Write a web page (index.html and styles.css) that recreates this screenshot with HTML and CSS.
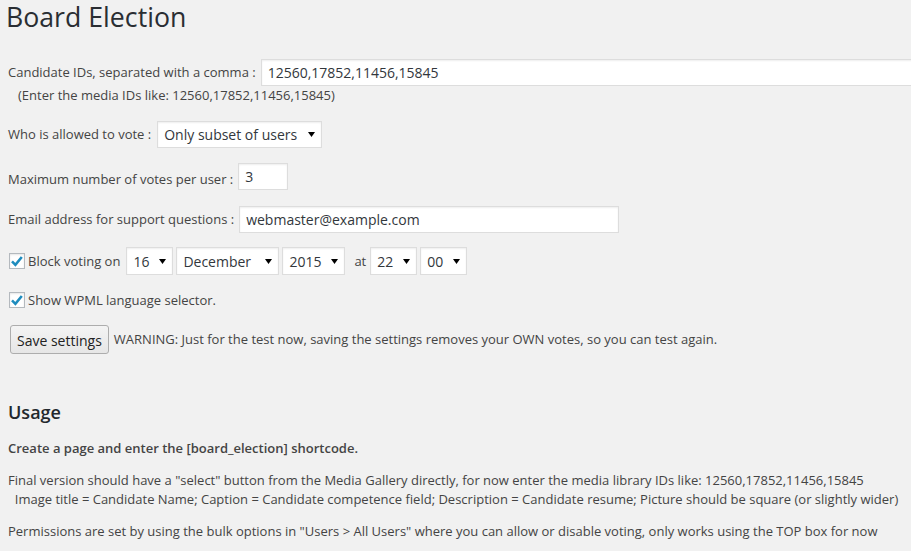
FILE: index.html
```html
<!DOCTYPE html>
<html lang="en">
<head>
<meta charset="utf-8">
<title>Board Election</title>
<link rel="stylesheet" href="styles.css">
</head>
<body>
<h1 class="title">Board Election</h1>
<form class="settings">
  <div class="row row-ids">
    <label class="lbl" for="ids">Candidate IDs, separated with a comma :</label>
    <input id="ids" class="text ids" type="text" value="12560,17852,11456,15845">
  </div>
  <div class="hint">(Enter the media IDs like: 12560,17852,11456,15845)</div>

  <div class="row row-who">
    <label class="lbl" for="who">Who is allowed to vote :</label>
    <select id="who" class="sel sel-who"><option>Only subset of users</option></select>
  </div>

  <div class="row row-max">
    <label class="lbl" for="max">Maximum number of votes per user :</label>
    <input id="max" class="text num" type="text" value="3">
  </div>

  <div class="row row-email">
    <label class="lbl" for="email">Email address for support questions :</label>
    <input id="email" class="text email" type="text" value="webmaster@example.com">
  </div>

  <div class="row row-block">
    <input class="chk" type="checkbox" checked>
    <span class="lbl chk-lbl">Block voting on</span>
    <div class="dates">
      <select class="sel sel-day"><option>16</option></select>
      <select class="sel sel-month"><option>December</option></select>
      <select class="sel sel-year"><option>2015</option></select>
      <span class="lbl at">at</span>
      <select class="sel sel-hour"><option>22</option></select>
      <select class="sel sel-min"><option>00</option></select>
    </div>
  </div>

  <div class="row row-wpml">
    <input class="chk" type="checkbox" checked>
    <span class="lbl chk-lbl">Show WPML language selector.</span>
  </div>

  <div class="row row-save">
    <button type="button" class="btn">Save settings</button>
    <span class="lbl warn">WARNING: Just for the test now, saving the settings removes your OWN votes, so you can test again.</span>
  </div>
</form>

<h2 class="usage">Usage</h2>
<p class="para strong">Create a page and enter the [board_election] shortcode.</p>
<p class="para">Final version should have a "select" button from the Media Gallery directly, for now enter the media library IDs like: 12560,17852,11456,15845<br>&nbsp;&nbsp;Image title = Candidate Name; Caption = Candidate competence field; Description = Candidate resume; Picture should be square (or slightly wider)</p>
<p class="para">Permissions are set by using the bulk options in "Users &gt; All Users" where you can allow or disable voting, only works using the TOP box for now</p>
</body>
</html>
```

FILE: styles.css
```css
html, body {
  margin: 0;
  background: #f1f1f1;
  overflow: hidden;
}

body {
  padding: 0 0 0 8px;
  font-family: "Open Sans", "Noto Sans", sans-serif;
  font-size: 13px;
  color: #444;
}

.title {
  margin: 0 0 0 -2px;
  padding-top: 3px;
  font-size: 26.7px;
  font-weight: 400;
  line-height: 27px;
  color: #2a2e33;
}

.settings {
  display: flex;
  flex-direction: column;
  margin-top: 29px;
}

.row {
  display: flex;
  align-items: center;
  gap: 5px;
  white-space: nowrap;
}

.lbl {
  line-height: 27px;
}

.text {
  box-sizing: border-box;
  height: 27px;
  margin: 0;
  padding: 0 6px;
  border: 1px solid #ddd;
  border-radius: 0;
  background: #fff;
  box-shadow: inset 0 1px 2px rgba(0, 0, 0, 0.07);
  font-family: "Open Sans", "Noto Sans", sans-serif;
  font-size: 14px;
  color: #32373c;
  outline: none;
}

.ids { width: 680px; flex: none; }
.num { width: 50px; }
.email { width: 380px; }

.hint {
  margin-left: 10px;
  line-height: 18px;
}

.row-who { margin-top: 17px; gap: 6px; }
.row-max { margin-top: 15px; align-items: flex-start; }
.row-max .lbl { padding-top: 3px; }
.row-email { margin-top: 13px; }
.row-block { margin-top: 14px; gap: 0; }
.row-wpml { margin-top: 15px; gap: 0; }
.row-save { margin-top: 15px; gap: 5px; }

.sel {
  -webkit-appearance: none;
  appearance: none;
  box-sizing: border-box;
  height: 27px;
  margin: 0;
  padding: 0 0 0 6px;
  border: 1px solid #ddd;
  border-radius: 0;
  background: #fff url("data:image/svg+xml,%3Csvg xmlns='http://www.w3.org/2000/svg' width='7' height='5'%3E%3Cpath d='M0 0h7L3.5 5z' fill='%23000'/%3E%3C/svg%3E") no-repeat right 6px center;
  box-shadow: inset 0 1px 2px rgba(0, 0, 0, 0.07);
  font-family: "Open Sans", "Noto Sans", sans-serif;
  font-size: 14px;
  color: #32373c;
  outline: none;
}

.sel-who { width: 165px; }

.dates {
  display: flex;
  align-items: center;
  gap: 3px;
  margin-left: 6px;
}

.dates .sel { height: 28px; }
.sel-day { width: 47px; }
.sel-month { width: 103px; }
.sel-year { width: 63px; }
.sel-hour { width: 47px; }
.sel-min { width: 47px; }

.at {
  margin: 0 1px 0 6px;
  line-height: 28px;
}

.chk {
  -webkit-appearance: none;
  appearance: none;
  box-sizing: border-box;
  flex: none;
  width: 16px;
  height: 16px;
  margin: 0 3px 0 1px;
  border: 1px solid #b4b9be;
  border-radius: 0;
  background: #fff url("data:image/svg+xml,%3Csvg xmlns='http://www.w3.org/2000/svg' width='14' height='14' viewBox='0 0 14 14'%3E%3Cpath d='M2 7.4 L5.4 10.8 L11.8 3' fill='none' stroke='%231e8cbe' stroke-width='2.6'/%3E%3C/svg%3E") no-repeat center;
  box-shadow: inset 0 1px 2px rgba(0, 0, 0, 0.1);
}

.row-block .lbl { line-height: 26px; }
.row-wpml .lbl { line-height: 20px; }

.btn {
  box-sizing: border-box;
  height: 29px;
  margin: 0 0 0 2px;
  padding: 1px 6px 0;
  border: 1px solid #adadad;
  border-radius: 3px;
  background: linear-gradient(#f4f4f4, #e6e6e6);
  font-family: "Open Sans", "Noto Sans", sans-serif;
  font-size: 14px;
  color: #222;
}

.warn { line-height: 29px; }

.usage {
  margin: 46px 0 15px;
  font-size: 18px;
  font-weight: 600;
  line-height: 24px;
  color: #23282d;
}

.para {
  margin: 0 0 12px;
  line-height: 19.5px;
}

.strong { font-weight: 600; }
```
